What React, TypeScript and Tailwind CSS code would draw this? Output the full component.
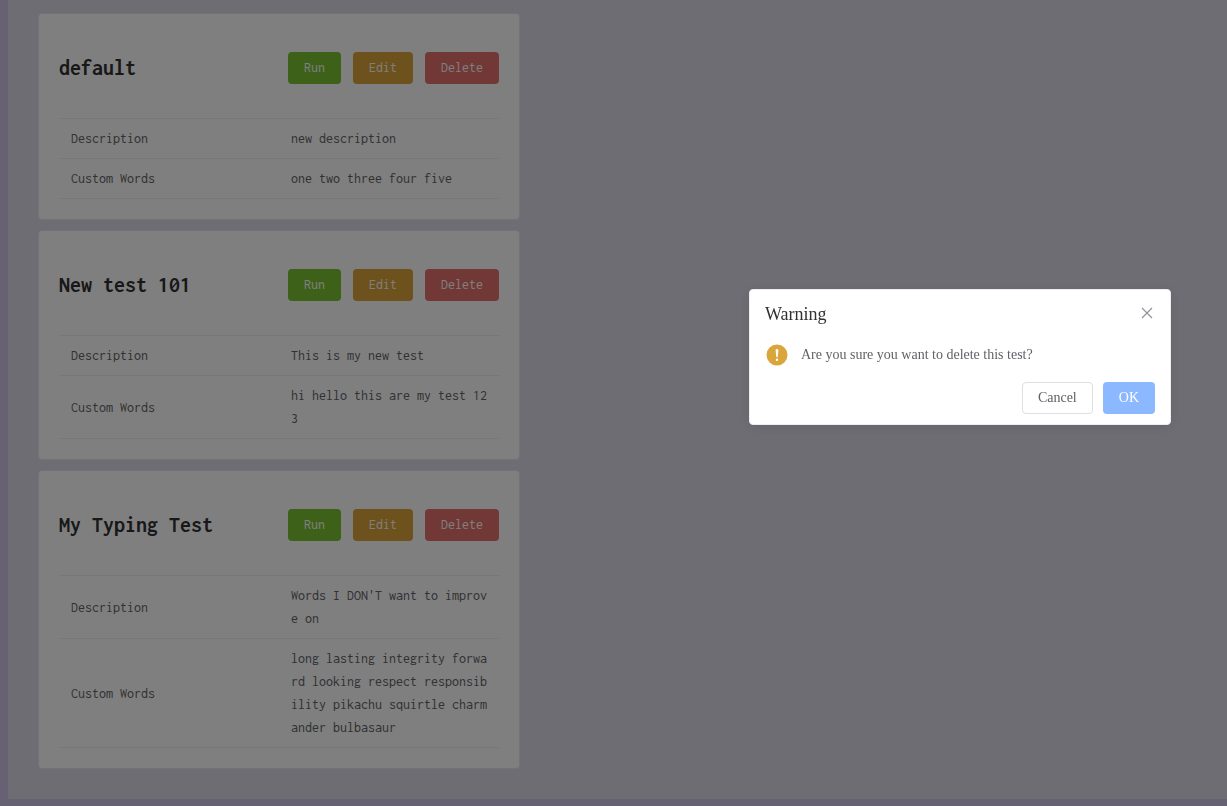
import { useState } from "react";

type Test = { name: string; description: string; words: string };

const tests: Test[] = [
  { name: "default", description: "new description", words: "one two three four five" },
  { name: "New test 101", description: "This is my new test", words: "hi hello this are my test 123" },
  {
    name: "My Typing Test",
    description: "Words I DON'T want to improve on",
    words: "long lasting integrity forward looking respect responsibility pikachu squirtle charmander bulbasaur",
  },
];

function Row({ label, value }: { label: string; value: string }) {
  return (
    <tr className="border-y border-[#ebeef5]">
      <th scope="row" className="w-1/2 px-3 py-2 text-left font-normal">
        {label}
      </th>
      <td className="w-1/2 py-2 pr-2 pl-3 break-all">{value}</td>
    </tr>
  );
}

function TestCard({ test, onDelete }: { test: Test; onDelete: () => void }) {
  const button = "h-8 rounded px-4 text-[14px] leading-none text-white";
  return (
    <article className="rounded border border-[#e4e7ed] bg-white p-5">
      <header className="mb-[34px] flex items-center justify-between pt-[18px]">
        <h2 className="text-[22px] leading-8 font-bold text-[#303133]">{test.name}</h2>
        <div className="flex gap-3">
          <button type="button" className={`${button} bg-[#7ac231]`}>Run</button>
          <button type="button" className={`${button} bg-[#daa53a]`}>Edit</button>
          <button type="button" className={`${button} bg-[#e2706b]`} onClick={onDelete}>Delete</button>
        </div>
      </header>
      <table className="w-full table-fixed border-collapse text-[14px] leading-[23px] text-[#606266]">
        <tbody>
          <Row label="Description" value={test.description} />
          <Row label="Custom Words" value={test.words} />
        </tbody>
      </table>
    </article>
  );
}

function WarningDialog({ onClose }: { onClose: () => void }) {
  return (
    <div className="fixed inset-0 flex items-center justify-end bg-black/50 pr-14 pb-[92px]">
      <div
        role="alertdialog"
        aria-modal="true"
        aria-labelledby="warning-title"
        aria-describedby="warning-message"
        className="w-full max-w-[422px] rounded border border-[#ebeef5] bg-white pb-2.5 font-['Liberation_Serif',serif] shadow-[0_2px_12px_rgba(0,0,0,0.1)]"
      >
        <div className="flex items-start justify-between px-[15px] pt-[15px] pb-2.5">
          <h2 id="warning-title" className="text-[18px] leading-[18px] text-[#303133]">Warning</h2>
          <button type="button" aria-label="Close" onClick={onClose} className="text-[#909399]">
            <svg viewBox="0 0 16 16" className="size-4" stroke="currentColor" strokeWidth="1.2">
              <path d="M3 3l10 10M13 3L3 13" />
            </svg>
          </button>
        </div>
        <div className="flex items-center gap-3 px-[15px] py-2.5">
          <svg viewBox="0 0 1024 1024" className="size-6" fill="#daa53a" aria-hidden="true">
            <path d="M512 64a448 448 0 1 1 0 896 448 448 0 0 1 0-896zm0 192a58.432 58.432 0 0 0-58.24 63.744l23.36 256.384a35.072 35.072 0 0 0 69.76 0l23.296-256.384A58.432 58.432 0 0 0 512 256zm0 512a51.2 51.2 0 1 0 0-102.4 51.2 51.2 0 0 0 0 102.4z" />
          </svg>
          <p id="warning-message" className="text-[14px] leading-6 text-[#606266]">
            Are you sure you want to delete this test?
          </p>
        </div>
        <div className="flex justify-end gap-2.5 px-[15px] pt-[5px] text-[14px] leading-none">
          <button type="button" onClick={onClose} className="h-8 rounded border border-[#dcdfe6] px-[15px] text-[#606266]">
            Cancel
          </button>
          <button type="button" onClick={onClose} className="h-8 rounded bg-[#8cb8ff] px-4 text-white">
            OK
          </button>
        </div>
      </div>
    </div>
  );
}

export default function App() {
  const [open, setOpen] = useState(true);
  return (
    <div className="min-h-screen bg-[#ccc4e6] pb-[7px] pl-2 font-['Inconsolata','Liberation_Mono',monospace]">
      <main className="bg-[#dddbe6] px-[30px] pt-[13px] pb-[30px]">
        <div className="flex max-w-[482px] flex-col gap-2.5">
          {tests.map((test) => (
            <TestCard key={test.name} test={test} onDelete={() => setOpen(true)} />
          ))}
        </div>
      </main>
      {open && <WarningDialog onClose={() => setOpen(false)} />}
    </div>
  );
}
